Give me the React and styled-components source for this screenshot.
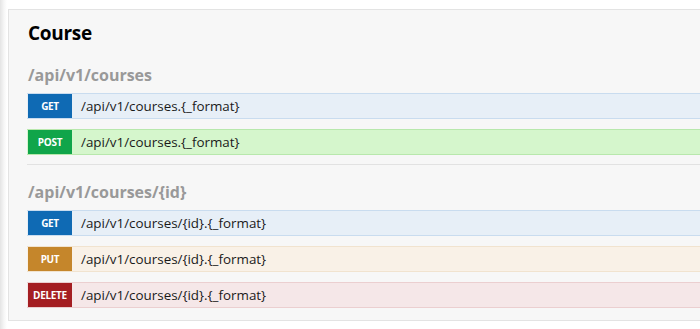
import React from "react";
import styled, { createGlobalStyle } from "styled-components";

const Global = createGlobalStyle`
  html, body { margin: 0; padding: 0; }
  body {
    width: 700px;
    height: 329px;
    overflow: hidden;
    background: linear-gradient(to right, #e4e4e4 0px, #f6f6f6 4px, #ffffff 7px) no-repeat;
    font-family: "Open Sans", "Noto Sans", sans-serif;
    color: #333;
  }
`;

const Page = styled.div`
  padding: 9px 0 0 8px;
`;

const Panel = styled.section`
  width: 720px;
  background: #f7f7f7;
  border: 1px solid #e3e3e3;
  padding: 11px 0 12px 18px;
  box-sizing: border-box;
`;

const Title = styled.h2`
  margin: 0 0 20px 1px;
  font-size: 19px;
  letter-spacing: -0.3px;
  line-height: 24px;
  font-weight: 700;
  color: #000;
`;

const Section = styled.div`
  display: flex;
  flex-direction: column;
  gap: 10px;
  padding-bottom: ${(p) => (p.$last ? "0" : "9px")};
  margin-bottom: ${(p) => (p.$last ? "0" : "17px")};
  border-bottom: ${(p) => (p.$last ? "none" : "1px solid #e2e2e2")};
`;

const Heading = styled.h3`
  margin: 0 0 -2px 1px;
  font-size: 16px;
  line-height: 20px;
  font-weight: 700;
  color: #999;
`;

const themes = {
  get: { badge: "#0f6ab4", bg: "#e7eff7", border: "#c9dcef" },
  post: { badge: "#10a54a", bg: "#d5f6cc", border: "#b8e8ac" },
  put: { badge: "#c5862b", bg: "#f9f1e7", border: "#f1e3cf" },
  delete: { badge: "#a41e22", bg: "#f5e7e8", border: "#ebcfd0" },
};

const Row = styled.div`
  display: flex;
  align-items: stretch;
  height: 26px;
  box-sizing: border-box;
  border: 1px solid ${(p) => themes[p.$method].border};
  border-left: none;
  background: ${(p) => themes[p.$method].bg};
`;

const Badge = styled.span`
  width: 44px;
  margin-left: 1px;
  flex: none;
  display: flex;
  align-items: center;
  justify-content: center;
  background: ${(p) => themes[p.$method].badge};
  color: #fff;
  font-size: 10px;
  font-weight: 700;
  letter-spacing: -0.3px;
  text-transform: uppercase;
`;

const Path = styled.span`
  display: flex;
  align-items: center;
  padding-left: 9px;
  font-size: 13.4px;
  color: #1a1a1a;
`;

const sections = [
  {
    heading: "/api/v1/courses",
    ops: [
      ["get", "/api/v1/courses.{_format}"],
      ["post", "/api/v1/courses.{_format}"],
    ],
  },
  {
    heading: "/api/v1/courses/{id}",
    ops: [
      ["get", "/api/v1/courses/{id}.{_format}"],
      ["put", "/api/v1/courses/{id}.{_format}"],
      ["delete", "/api/v1/courses/{id}.{_format}"],
    ],
  },
];

export default function App() {
  return (
    <>
      <Global />
      <Page>
        <Panel>
          <Title>Course</Title>
          {sections.map((s, i) => (
            <Section key={s.heading} $last={i === sections.length - 1}>
              <Heading>{s.heading}</Heading>
              {s.ops.map(([m, p]) => (
                <Row key={m + p} $method={m}>
                  <Badge $method={m}>{m}</Badge>
                  <Path>{p}</Path>
                </Row>
              ))}
            </Section>
          ))}
        </Panel>
      </Page>
    </>
  );
}
